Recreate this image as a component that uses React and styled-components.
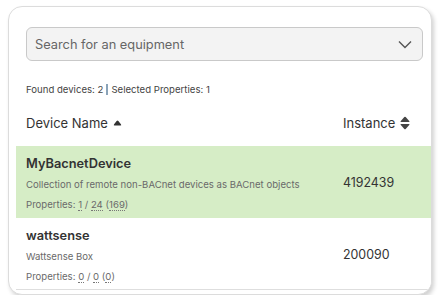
import React from "react";
import styled, { createGlobalStyle } from "styled-components";

const Global = createGlobalStyle`
  html, body { margin: 0; padding: 0; background: #fff; }
  body { font-family: Inter, "Noto Sans", sans-serif; color: #333; }
  * { box-sizing: border-box; }
`;

const Card = styled.div`
  margin: 6px 0 0 8px;
  width: 424px;
  height: 289px;
  border: 1px solid #dcdcdc;
  border-radius: 14px;
  box-shadow: 2px 3px 4px rgba(0, 0, 0, 0.18);
  background: #fff;
  padding-top: 20px;
  overflow: hidden;
  display: flex;
  flex-direction: column;
`;

const Search = styled.div`
  margin: 0 8px 0 17px;
  height: 34px;
  border: 1px solid #c9c9c9;
  border-radius: 6px;
  background: #f3f3f3;
  display: flex;
  align-items: center;
  justify-content: space-between;
  padding: 0 10px 0 8px;
  font-size: 12.8px;
  color: #666;
`;

const Info = styled.div`
  margin: 23px 0 0 17px;
  font-size: 9.6px;
  color: #444;
  display: flex;
  align-items: center;
  gap: 3px;
`;

const Sep = styled.span`
  display: inline-block;
  width: 2px;
  height: 11px;
  background: #8aa3b8;
`;

const Header = styled.div`
  margin: 16px 0 0 7px;
  height: 35px;
  display: grid;
  grid-template-columns: 1fr 88px;
  align-items: start;
  padding: 4px 0 0 10px;
  font-size: 13px;
  color: #333;
`;

const HeadCell = styled.div`
  display: flex;
  align-items: center;
  gap: 5px;
`;

const Row = styled.div`
  margin-left: 7px;
  height: 72px;
  display: grid;
  grid-template-columns: 1fr 88px;
  align-items: center;
  padding: 0 0 0 10px;
  background: ${(p) => (p.$selected ? "#d6edc6" : "#fff")};
  border-bottom: ${(p) => (p.$last ? "1px solid #dedede" : "none")};
`;

const Info2 = styled.div`
  align-self: start;
  padding-top: 8px;
  display: flex;
  flex-direction: column;
`;

const Name = styled.div`
  font-size: 12.8px;
  font-weight: 600;
  color: #333;
  line-height: 20px;
`;

const Desc = styled.div`
  font-size: 9.6px;
  color: #6a6a6a;
  line-height: 21px;
`;

const Props = styled.div`
  font-size: 9.6px;
  color: #6a6a6a;
  line-height: 20px;
`;

const Dot = styled.span`
  border-bottom: 1px dotted #777;
`;

const Instance = styled.div`
  font-size: 12.4px;
  color: #333;
  padding-top: 1px;
`;

const Chevron = () => (
  <svg width="14" height="9" viewBox="0 0 14 9">
    <path d="M1 1.5 L7 7.5 L13 1.5" fill="none" stroke="#555" strokeWidth="1.4" />
  </svg>
);

const SortUp = () => (
  <svg width="9" height="6" viewBox="0 0 10 7">
    <path d="M1.5 6.5 Q0 6.5 1 5 L4 1.3 Q5 0 6 1.3 L9 5 Q10 6.5 8.5 6.5 Z" fill="#333" />
  </svg>
);

const SortBoth = () => (
  <svg width="10" height="14" viewBox="0 0 10 14">
    <path d="M1 6 Q0 6 0.8 5 L4.3 1 Q5 0.3 5.7 1 L9.2 5 Q10 6 9 6 Z" fill="#444" />
    <path d="M1 8 Q0 8 0.8 9 L4.3 13 Q5 13.7 5.7 13 L9.2 9 Q10 8 9 8 Z" fill="#444" />
  </svg>
);

const devices = [
  { name: "MyBacnetDevice", desc: "Collection of remote non-BACnet devices as BACnet objects", sel: "1", total: "24", all: "169", inst: "4192439", selected: true },
  { name: "wattsense", desc: "Wattsense Box", sel: "0", total: "0", all: "0", inst: "200090", selected: false },
];

export default function App() {
  return (
    <>
      <Global />
      <Card>
        <Search>
          <span>Search for an equipment</span>
          <Chevron />
        </Search>
        <Info>
          <span>Found devices: 2</span>
          <Sep />
          <span>Selected Properties: 1</span>
        </Info>
        <Header>
          <HeadCell>
            Device Name <SortUp />
          </HeadCell>
          <HeadCell>
            Instance <SortBoth />
          </HeadCell>
        </Header>
        {devices.map((d, i) => (
          <Row key={d.name} $selected={d.selected} $last={i === devices.length - 1}>
            <Info2>
              <Name>{d.name}</Name>
              <Desc>{d.desc}</Desc>
              <Props>
                Properties: <Dot>{d.sel}</Dot> / <Dot>{d.total}</Dot> (<Dot>{d.all}</Dot>)
              </Props>
            </Info2>
            <Instance>{d.inst}</Instance>
          </Row>
        ))}
      </Card>
    </>
  );
}
